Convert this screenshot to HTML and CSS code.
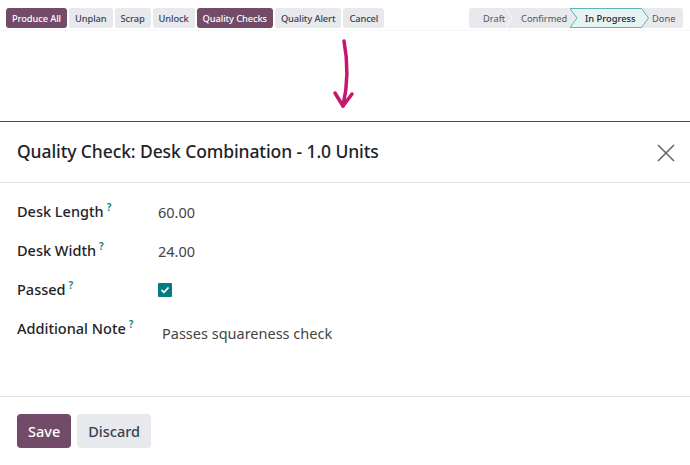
FILE: index.html
```html
<!DOCTYPE html>
<html>
<head>
<meta charset="utf-8">
<link rel="stylesheet" href="styles.css">
</head>
<body>
<div class="topbar">
  <div class="actions">
    <span class="btn primary">Produce All</span>
    <span class="btn">Unplan</span>
    <span class="btn">Scrap</span>
    <span class="btn">Unlock</span>
    <span class="btn primary">Quality Checks</span>
    <span class="btn">Quality Alert</span>
    <span class="btn">Cancel</span>
  </div>
  <div class="status">
    <span class="stage s-draft">Draft<svg class="sep" width="8" height="20" viewBox="0 0 8 20"><path d="M0.5 0 L7 10 L0.5 20" fill="none" stroke="#f6f7f9" stroke-width="1.2"/></svg></span>
    <span class="stage s-conf">Confirmed</span>
    <span class="stage current"><svg class="shape" width="80" height="20" viewBox="0 0 80 20"><path d="M0 0.5 L71.5 0.5 L78.5 10 L71.5 19.5 L0 19.5 L7 10 Z" fill="#e6f3f3" stroke="#5fb3b7" stroke-width="1"/></svg><span class="lbl">In Progress</span></span>
    <span class="stage s-done">Done</span>
  </div>
</div>
<div class="arrow-zone">
  <svg class="arrow" width="40" height="76" viewBox="0 0 40 76">
    <path d="M18 3 C22 24 22 46 17 68" fill="none" stroke="#c8166d" stroke-width="3.5" stroke-linecap="round"/>
    <path d="M9 55 L17 68 L26 56" fill="none" stroke="#c8166d" stroke-width="3.5" stroke-linecap="round" stroke-linejoin="round"/>
  </svg>
</div>
<div class="modal">
  <div class="modal-header">
    <h1 class="title">Quality Check: Desk Combination - 1.0 Units</h1>
    <svg class="close" width="18" height="18" viewBox="0 0 18 18"><path d="M1 1 L17 17 M17 1 L1 17" stroke="#666" stroke-width="1.6"/></svg>
  </div>
  <div class="modal-body">
    <div class="row"><div class="label">Desk Length<sup>?</sup></div><div class="value">60.00</div></div>
    <div class="row"><div class="label">Desk Width<sup>?</sup></div><div class="value">24.00</div></div>
    <div class="row"><div class="label">Passed<sup>?</sup></div><div class="value"><span class="check"><svg width="10" height="8" viewBox="0 0 10 8"><path d="M1.5 4 L4 6.3 L8.5 1.5" fill="none" stroke="#fff" stroke-width="1.8"/></svg></span></div></div>
    <div class="row"><div class="label">Additional Note<sup>?</sup></div><div class="value text">Passes squareness check</div></div>
  </div>
  <div class="modal-footer">
    <span class="fbtn save">Save</span>
    <span class="fbtn discard">Discard</span>
  </div>
</div>
</body>
</html>
```
FILE: styles.css
```css
* { box-sizing: border-box; }
body {
  margin: 0;
  width: 690px;
  height: 465px;
  overflow: hidden;
  background: #fff;
  font-family: "Noto Sans", "Open Sans", sans-serif;
  color: #212529;
}
.topbar {
  display: flex;
  justify-content: space-between;
  align-items: center;
  padding: 6px 7px 0 6px;
  height: 31px;
  border-bottom: 1px solid #f6f6f6;
}
.actions { display: flex; gap: 2px; }
.btn {
  display: inline-flex;
  align-items: center;
  height: 20px;
  padding: 0 6px;
  font-size: 9.3px;
  font-weight: 500;
  background: #e7e9ed;
  color: #374151;
  border-radius: 3px;
  letter-spacing: -0.1px;
}
.btn.primary { background: #714b67; color: #fff; }
.status {
  display: flex;
  height: 20px;
  width: 214px;
  background: #e7e9ed;
  border-radius: 3px;
  font-size: 9.3px;
  color: #555;
}
.stage {
  display: flex;
  align-items: center;
  position: relative;
  height: 20px;
}
.s-draft { width: 44px; padding-left: 14px; }
.s-draft .sep { position: absolute; right: 0; top: 0; }
.s-conf { width: 57px; padding-left: 8px; }
.current { width: 80px; padding-left: 15px; }
.current .shape { position: absolute; left: 0; top: 0; }
.current .lbl { position: relative; color: #222; font-weight: 500; }
.s-done { width: 33px; padding-left: 2px; }
.arrow-zone {
  height: 90px;
  display: flex;
  justify-content: center;
  padding-left: 2px;
}
.arrow { margin-top: 7px; }
.modal {
  border-top: 1.5px solid #4a4a4a;
}
.modal-header {
  height: 61px;
  display: flex;
  align-items: center;
  justify-content: space-between;
  padding: 0 15px 0 17px;
  border-bottom: 1px solid #dee2e6;
}
.title {
  margin: 0;
  font-size: 17.5px;
  font-weight: 500;
  color: #1f2328;
  letter-spacing: -0.1px;
  padding-bottom: 2px;
}
.close { margin-top: 1px; }
.modal-body {
  height: 214px;
  padding: 8px 17px 0 17px;
  border-bottom: 1px solid #dee2e6;
}
.row {
  display: flex;
  align-items: center;
  height: 39px;
}
.label {
  width: 141px;
  font-size: 14.5px;
  font-weight: 500;
  color: #1f2328;
}
.label sup {
  font-size: 10px;
  color: #017e84;
  font-weight: 600;
  margin-left: 3px;
  vertical-align: 6px;
}
.value {
  font-size: 14.5px;
  color: #444;
  padding-top: 2px;
}
.value.text { padding-left: 4px; padding-top: 0; position: relative; top: 5px; }
.check {
  display: flex;
  align-items: center;
  justify-content: center;
  width: 14px;
  height: 14px;
  background: #017e84;
  border-radius: 1px;
}
.modal-footer {
  display: flex;
  gap: 6px;
  padding: 17px 17px;
}
.fbtn {
  display: inline-flex;
  align-items: center;
  height: 34px;
  padding: 0 11px;
  font-size: 14.5px;
  font-weight: 500;
  border-radius: 4px;
}
.save { background: #714b67; color: #fff; }
.discard { background: #e7e9ed; color: #374151; }
```
